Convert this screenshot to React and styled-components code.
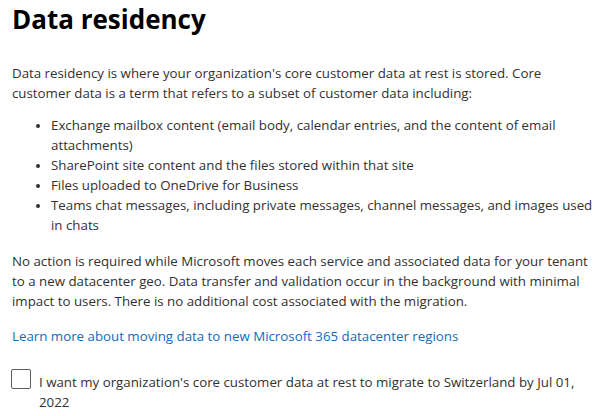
import React, { useState } from 'react'
import styled, { createGlobalStyle } from 'styled-components'

const Global = createGlobalStyle`
  html, body {
    margin: 0;
    padding: 0;
    background: #ffffff;
  }
  body {
    font-family: "Segoe UI", "Open Sans", "Noto Sans", sans-serif;
    color: #323130;
  }
`;

const Page = styled.div`
  width: 604px;
  padding: 1px 12px 0 12px;
  box-sizing: border-box;
`;

const Title = styled.h1`
  margin: 0 0 26px 0;
  font-size: 26px;
  line-height: 36px;
  font-weight: 700;
  color: #000000;
`;

const Para = styled.p`
  margin: 0 0 ${(p) => p.gap}px 0;
  font-size: 13.3px;
  line-height: 20px;
`;

const List = styled.ul`
  margin: 0 -10px 16px 0;
  padding-left: 39px;
  font-size: 13.3px;
  line-height: 20px;
  li::marker {
    font-size: 12px;
  }
`;

const Link = styled.a`
  display: block;
  color: #0f6cbd;
  text-decoration: none;
  font-size: 13.3px;
  line-height: 20px;
  margin-bottom: 26px;
`;

const CheckRow = styled.label`
  display: flex;
  align-items: flex-start;
  gap: 8px;
  margin-right: -10px;
  font-size: 13.3px;
  line-height: 20px;
  cursor: pointer;
`;

const Box = styled.span`
  flex: none;
  width: 18px;
  height: 18px;
  margin-top: -3px;
  margin-left: -1px;
  border: 1px solid #605e5c;
  border-radius: 2px;
  background: ${(p) => (p.checked ? '#0078d4' : '#ffffff')};
`;

const App = () => {
  const [checked, setChecked] = useState(false)
  return (
    <Page>
      <Global />
      <Title>Data residency</Title>
      <Para gap={12}>
        Data residency is where your organization&apos;s core customer data at rest is stored. Core
        customer data is a term that refers to a subset of customer data including:
      </Para>
      <List>
        <li>Exchange mailbox content (email body, calendar entries, and the content of email attachments)</li>
        <li>SharePoint site content and the files stored within that site</li>
        <li>Files uploaded to OneDrive for Business</li>
        <li>Teams chat messages, including private messages, channel messages, and images used in chats</li>
      </List>
      <Para gap={15}>
        No action is required while Microsoft moves each service and associated data for your tenant
        to a new datacenter geo. Data transfer and validation occur in the background with minimal
        impact to users. There is no additional cost associated with the migration.
      </Para>
      <Link href="#">Learn more about moving data to new Microsoft 365 datacenter regions</Link>
      <CheckRow onClick={() => setChecked(!checked)}>
        <Box checked={checked} />
        <span>I want my organization&apos;s core customer data at rest to migrate to Switzerland by Jul 01, 2022</span>
      </CheckRow>
    </Page>
  )
}

export default App
